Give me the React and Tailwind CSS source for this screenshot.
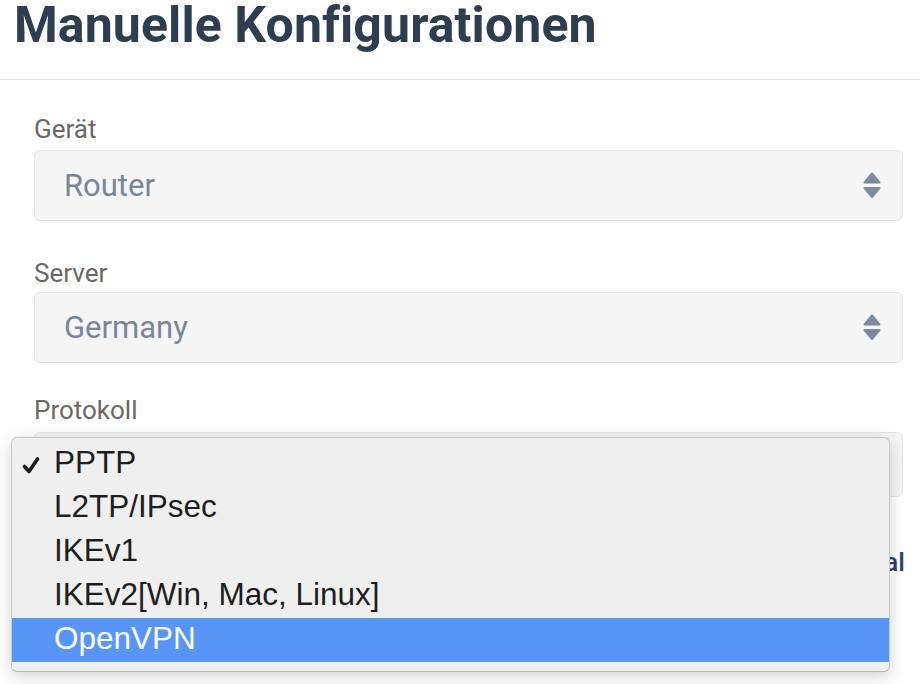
import React from "react";

function Arrows() {
  return (
    <svg width="18" height="27" viewBox="0 0 18 27" className="shrink-0">
      <path d="M9 1.5 L16.5 10.5 L1.5 10.5 Z" fill="#7b8a9c" stroke="#7b8a9c" strokeWidth="2" strokeLinejoin="round" />
      <path d="M1.5 16 L16.5 16 L9 25 Z" fill="#7b8a9c" stroke="#7b8a9c" strokeWidth="2" strokeLinejoin="round" />
    </svg>
  );
}

function Select({ value, h = "h-[71px]" }) {
  return (
    <div className={`${h} flex items-center justify-between rounded-[6px] border border-[#e4e4e4] bg-[#f5f5f5] pl-[29px] pr-[21px]`}>
      <span className="text-[31px] leading-none text-[#77879b]">{value}</span>
      <Arrows />
    </div>
  );
}

function Label({ children }) {
  return <div className="text-[26px] leading-[30px] text-[#6b6866]">{children}</div>;
}

const items = ["PPTP", "L2TP/IPsec", "IKEv1", "IKEv2[Win, Mac, Linux]", "OpenVPN"];

export default function App() {
  return (
    <div className="relative h-[684px] w-[920px] overflow-hidden bg-white font-['Roboto',sans-serif]">
      <header className="h-[80px] border-b border-[#e2e2e2] pl-[14px]">
        <h1 className="text-[50px] font-bold leading-[50px] tracking-[0.1px] text-[#2c3e50]">Manuelle Konfigurationen</h1>
      </header>

      <div className="pl-[34px] pr-[17px] pt-[34px]">
        <Label>Gerät</Label>
        <div className="mt-[6px]">
          <Select value="Router" />
        </div>

        <div className="mt-[37px]">
          <Label>Server</Label>
        </div>
        <div className="mt-[4px]">
          <Select value="Germany" />
        </div>

        <div className="mt-[32px]">
          <Label>Protokoll</Label>
        </div>
        <div className="mt-[7px]">
          <Select value="PPTP" h="h-[65px]" />
        </div>

        <div className="-mr-[2px] mt-[50px] flex justify-end">
          <a className="text-[26px] font-medium leading-[30px] text-[#2b4566]">Manual</a>
        </div>
      </div>

      <div className="absolute left-[11px] top-[437px] h-[235px] w-[879px] rounded-[6px] border border-[#c9c9c9] border-b-[#b5b5b5] bg-[#efefef] pt-[4px] font-['Liberation_Sans',sans-serif] shadow-[0_4px_16px_rgba(0,0,0,0.18)]">
        {items.map((it, i) => {
          const sel = i === items.length - 1;
          return (
            <div key={it} className={`relative h-[44px] ${sel ? "bg-[#5796f6] text-white" : "text-[#1e1e1e]"}`}>
              {i === 0 && (
                <svg width="18" height="17" viewBox="0 0 18 17" className="absolute left-[10px] top-[15px]">
                  <path d="M2.5 9.5 L7 14.5 L15.5 2" fill="none" stroke="#1e1e1e" strokeWidth="3.6" strokeLinecap="round" strokeLinejoin="round" />
                </svg>
              )}
              <div className="pl-[42px] text-[31.5px] leading-[40px]">{it}</div>
            </div>
          );
        })}
      </div>
    </div>
  );
}
